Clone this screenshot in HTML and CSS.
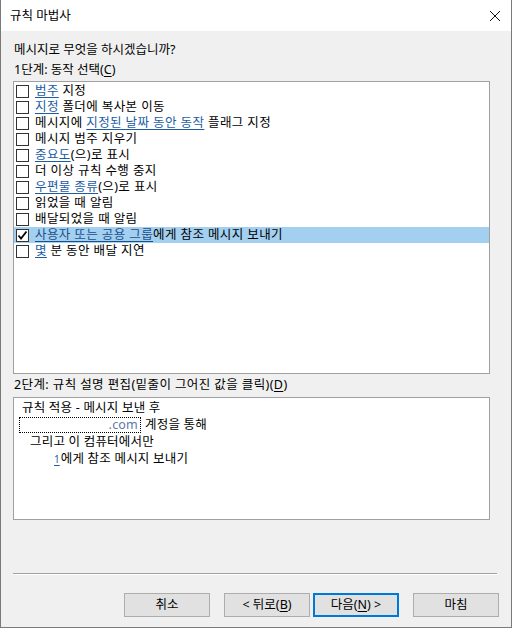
FILE: index.html
```html
<!DOCTYPE html>
<html lang="ko">
<head>
<meta charset="utf-8">
<link rel="stylesheet" href="styles.css">
</head>
<body>
<div class="window">
  <div class="titlebar">
    <span class="title">규칙 마법사</span>
    <svg class="close" width="12" height="12" viewBox="0 0 12 12"><path d="M1 1L11 11M11 1L1 11" stroke="#111" stroke-width="1" fill="none"/></svg>
  </div>
  <div class="content">
    <div class="label">메시지로 무엇을 하시겠습니까?</div>
    <div class="label step1">1단계: 동작 선택(<u>C</u>)</div>
    <div class="listbox">
      <div class="row"><span class="cb"></span><span><a>범주</a> 지정</span></div>
      <div class="row"><span class="cb"></span><span><a>지정</a> 폴더에 복사본 이동</span></div>
      <div class="row"><span class="cb"></span><span>메시지에 <a>지정된 날짜 동안 동작</a> 플래그 지정</span></div>
      <div class="row"><span class="cb"></span><span>메시지 범주 지우기</span></div>
      <div class="row"><span class="cb"></span><span><a>중요도</a>(으)로 표시</span></div>
      <div class="row"><span class="cb"></span><span>더 이상 규칙 수행 중지</span></div>
      <div class="row"><span class="cb"></span><span><a>우편물 종류</a>(으)로 표시</span></div>
      <div class="row"><span class="cb"></span><span>읽었을 때 알림</span></div>
      <div class="row"><span class="cb"></span><span>배달되었을 때 알림</span></div>
      <div class="row selected"><span class="cb checked"><svg width="11" height="11" viewBox="0 0 11 11"><path d="M1.5 5.5L4 8.5L9.5 1.5" stroke="#000" stroke-width="1.8" fill="none"/></svg></span><span><a class="dark">사용자 또는 공용 그룹</a>에게 참조 메시지 보내기</span></div>
      <div class="row"><span class="cb"></span><span><a>몇</a> 분 동안 배달 지연</span></div>
    </div>
    <div class="label step2">2단계: 규칙 설명 편집(밑줄이 그어진 값을 클릭)(<u>D</u>)</div>
    <div class="descbox">
      <div class="dline">규칙 적용 - 메시지 보낸 후</div>
      <div class="dline acct"><span class="dotted"><a>.com</a></span><span>계정을 통해</span></div>
      <div class="dline ind1">그리고 이 컴퓨터에서만</div>
      <div class="dline ind2"><a class="tiny">1</a>에게 참조 메시지 보내기</div>
    </div>
    <div class="spacer"></div>
    <div class="sep"></div>
    <div class="buttons">
      <button class="btn">취소</button>
      <button class="btn back">&lt; 뒤로(<u>B</u>)</button>
      <button class="btn default">다음(<u>N</u>) &gt;</button>
      <button class="btn finish">마침</button>
    </div>
  </div>
</div>
</body>
</html>
```
FILE: styles.css
```css
* { box-sizing: border-box; }
html, body { margin: 0; padding: 0; }
body {
  width: 512px;
  height: 628px;
  font-family: "Noto Sans", "Noto Sans CJK KR", sans-serif;
  font-size: 12.5px;
  color: #000;
  background: #fff;
}
.window {
  width: 512px;
  height: 628px;
  display: flex;
  flex-direction: column;
  border-left: 1px solid #7a7a7a;
  border-right: 1px solid #7a7a7a;
  border-bottom: 1px solid #7a7a7a;
  background: #f0f0f0;
}
.titlebar {
  height: 31px;
  background: #fff;
  display: flex;
  align-items: center;
  justify-content: space-between;
  padding: 0 10px 0 9px;
  flex: none;
}
.title { line-height: 16px; }
.label { line-height: 16px; height: 16px; padding-left: 1px; white-space: nowrap; }
.content {
  flex: 1;
  display: flex;
  flex-direction: column;
  padding: 11px 0 0 12px;
}
.step1 { margin-top: 4px; }
a { color: #1b5ca5; text-decoration: underline; text-underline-offset: 2px; }
a.dark { color: #1b4f8a; }
u { text-underline-offset: 2px; }
.listbox {
  margin-top: 3px;
  width: 477px;
  height: 293px;
  background: #fff;
  border: 1px solid #a0a0a0;
  padding-top: 1px;
  flex: none;
}
.row {
  height: 16px;
  line-height: 16px;
  display: flex;
  align-items: center;
  white-space: nowrap;
  letter-spacing: 0.4px;
}
.row.selected { background: #a3cff0; }
.cb {
  width: 13px;
  height: 13px;
  border: 1px solid #333;
  background: #fff;
  margin-left: 2px;
  margin-right: 6px;
  flex: none;
  display: flex;
  align-items: center;
  justify-content: center;
}
.step2 { margin-top: 3px; letter-spacing: 0.4px; }
.descbox {
  margin-top: 4px;
  width: 477px;
  height: 123px;
  background: #fff;
  border: 1px solid #a0a0a0;
  padding-top: 1px;
  flex: none;
}
.dline { height: 17px; line-height: 17px; padding-left: 8px; white-space: nowrap; letter-spacing: 0.2px; }
.acct { display: flex; align-items: center; padding-left: 5px; }
.dotted {
  width: 122px;
  height: 16px;
  line-height: 14px;
  border: 1px dotted #000;
  text-align: right;
  padding-right: 2px;
  margin-right: 4px;
}
.dotted a { color: #5a7aa8; text-decoration: none; }
.ind1 { padding-left: 16px; }
.ind2 { padding-left: 40px; }
.tiny { font-size: 10px; letter-spacing: 0; margin-right: 1px; }
.spacer { height: 53px; flex: none; }
.sep {
  width: 484px;
  height: 2px;
  border-top: 1px solid #a0a0a0;
  border-bottom: 1px solid #fff;
  flex: none;
}
.buttons {
  margin-top: 18px;
  display: flex;
  padding-left: 111px;
}
.btn {
  width: 86px;
  height: 24px;
  border: 1px solid #adadad;
  background: #e1e1e1;
  font: inherit;
  color: #000;
  padding: 0;
  line-height: 20px;
}
.back { margin-left: 14px; }
.default { margin-left: 3px; border: 2px solid #0078d7; }
.finish { margin-left: 14px; }
```
